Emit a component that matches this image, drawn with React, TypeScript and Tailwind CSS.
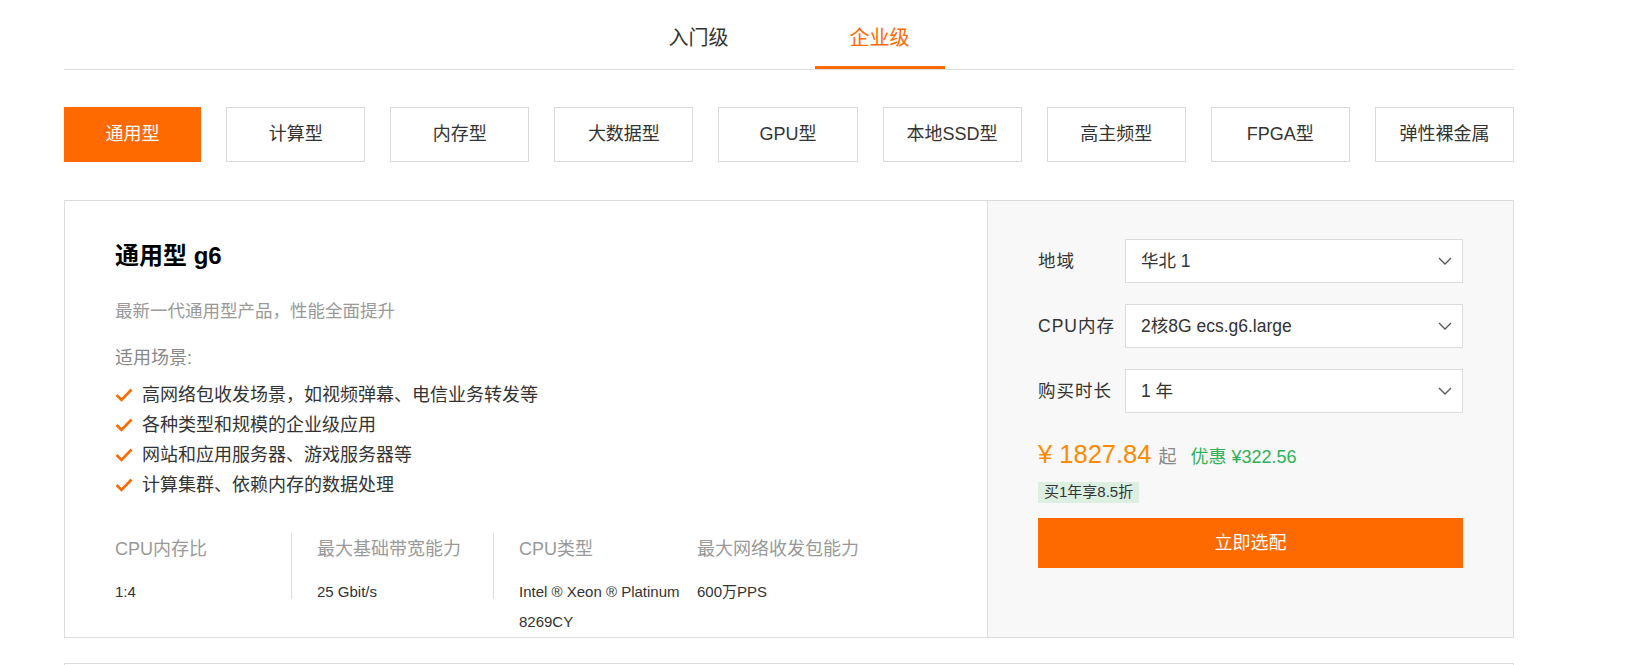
import { FC } from "react";

const font = { fontFamily: '"Liberation Sans", "Noto Sans CJK SC", sans-serif' };

const categories = ["通用型", "计算型", "内存型", "大数据型", "GPU型", "本地SSD型", "高主频型", "FPGA型", "弹性裸金属"];

const scenes = [
    "高网络包收发场景，如视频弹幕、电信业务转发等",
    "各种类型和规模的企业级应用",
    "网站和应用服务器、游戏服务器等",
    "计算集群、依赖内存的数据处理",
];

const CheckIcon: FC = () => (
    <svg width="18" height="14" viewBox="0 0 18 14" className="shrink-0">
        <polyline points="1.5,7 6.5,12 16.5,1.5" fill="none" stroke="#ff6a00" strokeWidth="2.6" strokeLinejoin="miter" />
    </svg>
);

const Chevron: FC = () => (
    <svg width="14" height="8" viewBox="0 0 14 8">
        <polyline points="1,1 7,7 13,1" fill="none" stroke="#555" strokeWidth="1.3" />
    </svg>
);

interface SelectRowProps {
    label: string;
    value: string;
}

const SelectRow: FC<SelectRowProps> = ({ label, value }) => (
    <div className="flex items-center">
        <div className="w-[87px] text-[17.5px] tracking-[1px] text-[#333]">{label}</div>
        <div className="flex-1 h-[44px] bg-white border border-[#dcdcdc] flex items-center justify-between pl-[15px] pr-[10px]">
            <span className="text-[17.5px] text-[#333]">{value}</span>
            <Chevron />
        </div>
    </div>
);

export default function App() {
    return (
        <div style={font} className="w-[1634px] h-[665px] overflow-hidden bg-white">
            <div className="ml-[64px] w-[1450px]">
                {/* level tabs */}
                <div className="flex justify-center gap-[51px] border-b border-[#dedede]">
                    <div className="w-[130px] h-[69px] border-b-[3px] border-transparent pt-[24px] text-center text-[20px] leading-[28px] text-[#333]">入门级</div>
                    <div className="w-[130px] h-[69px] border-b-[3px] border-[#ff6a00] pt-[24px] text-center text-[20px] leading-[28px] text-[#ff6a00]">企业级</div>
                </div>

                {/* category buttons */}
                <div className="mt-[37px] flex gap-[25px]">
                    {categories.map((c, i) => (
                        <div
                            key={c}
                            className={
                                i === 0
                                    ? "flex-1 h-[55px] flex items-center justify-center bg-[#ff6a00] text-white text-[18px]"
                                    : "flex-1 h-[55px] flex items-center justify-center border border-[#d9d9d9] text-[#333] text-[18px]"
                            }
                        >
                            {c}
                        </div>
                    ))}
                </div>

                {/* product card */}
                <div className="mt-[38px] flex border border-[#dcdcdc]">
                    <div className="flex-1 pl-[50px] pt-[39px]">
                        <h2 className="text-[24px] leading-[32px] font-bold text-black">通用型 g6</h2>
                        <p className="mt-[27px] text-[17.5px] leading-[24px] text-[#999]">最新一代通用型产品，性能全面提升</p>
                        <p className="mt-[23px] text-[18px] leading-[24px] text-[#888]">适用场景:</p>
                        <ul className="mt-[10px]">
                            {scenes.map((s) => (
                                <li key={s} className="flex items-center gap-[9px] text-[18px] leading-[30px] text-[#333]">
                                    <CheckIcon />
                                    {s}
                                </li>
                            ))}
                        </ul>
                        <div className="mt-[33px] flex items-start">
                            <div className="w-[177px] h-[66px] border-r border-[#dcdcdc]">
                                <div className="text-[18px] leading-[33px] text-[#999]">CPU内存比</div>
                                <div className="mt-[11px] text-[15px] leading-[30px] text-[#333]">1:4</div>
                            </div>
                            <div className="w-[202px] h-[66px] pl-[25px] border-r border-[#dcdcdc]">
                                <div className="text-[18px] leading-[33px] text-[#999]">最大基础带宽能力</div>
                                <div className="mt-[11px] text-[15px] leading-[30px] text-[#333]">25 Gbit/s</div>
                            </div>
                            <div className="w-[203px] pl-[25px]">
                                <div className="text-[18px] leading-[33px] text-[#999]">CPU类型</div>
                                <div className="mt-[11px] text-[15px] leading-[30px] text-[#333]">Intel ® Xeon ® Platinum 8269CY</div>
                            </div>
                            <div className="w-[200px]">
                                <div className="text-[18px] leading-[33px] text-[#999]">最大网络收发包能力</div>
                                <div className="mt-[11px] text-[15px] leading-[30px] text-[#333]">600万PPS</div>
                            </div>
                        </div>
                    </div>

                    <div className="w-[526px] bg-[#f8f8f8] border-l border-[#dcdcdc] px-[50px] pt-[38px]">
                        <div className="flex flex-col gap-[21px]">
                            <SelectRow label="地域" value="华北 1" />
                            <SelectRow label="CPU内存" value="2核8G ecs.g6.large" />
                            <SelectRow label="购买时长" value="1 年" />
                        </div>
                        <div className="mt-[24px] flex items-baseline h-[34px] leading-[34px]">
                            <span className="text-[25.5px] text-[#ff8a00]">¥ 1827.84</span>
                            <span className="ml-[7px] text-[18px] text-[#888]">起</span>
                            <span className="ml-[14px] text-[18px] text-[#2fb05a]">优惠 ¥322.56</span>
                        </div>
                        <div className="mt-[11px] flex w-fit h-[21px] items-center bg-[#dcefe1] px-[6px] text-[15px] text-[#333]">买1年享8.5折</div>
                        <div className="mt-[15px] h-[50px] bg-[#ff6a00] flex items-center justify-center text-[18px] text-white">立即选配</div>
                    </div>
                </div>

                <div className="mt-[25px] h-[40px] border border-[#dcdcdc]" />
            </div>
        </div>
    );
}
